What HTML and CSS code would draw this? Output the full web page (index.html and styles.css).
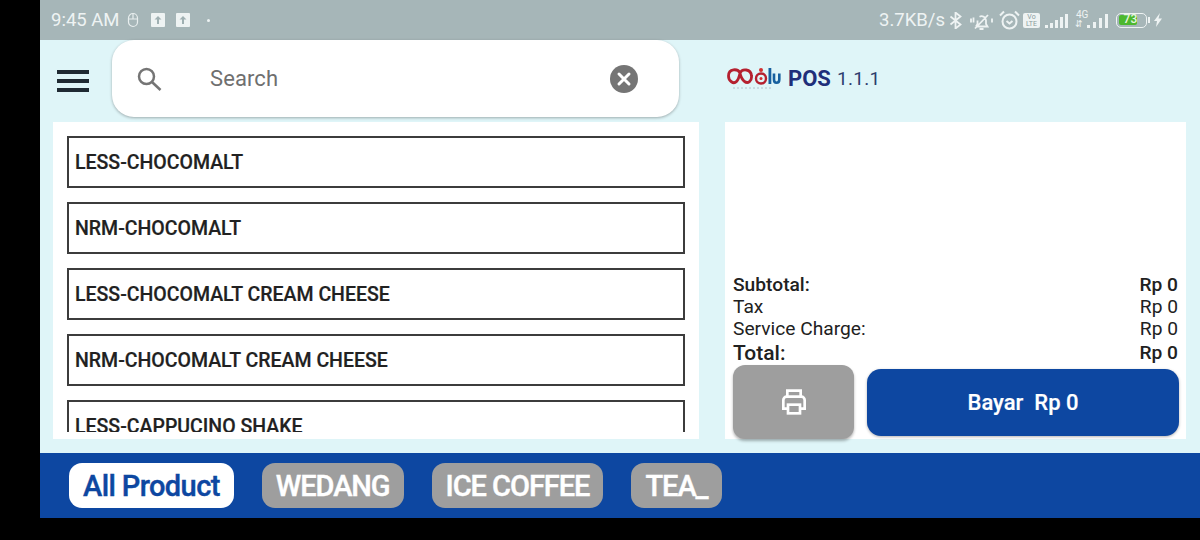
FILE: index.html
```html
<!DOCTYPE html>
<html lang="id">
<head>
    <meta charset="UTF-8">
    <title>Wolu POS</title>
    <link rel="stylesheet" href="styles.css">
</head>
<body>
<div class="screen">
    <div class="status-bar">
        <div class="status-left">
            <span class="clock">9:45 AM</span>
            <svg class="ic-mouse" width="12" height="16" viewBox="0 0 12 16" fill="none" stroke="#e8eeee" stroke-width="1.2"><rect x="1.5" y="1.5" width="9" height="13" rx="4.5"/><path d="M1.5 7h9M6 1.5v5.5"/></svg>
            <svg class="ic-up" width="14" height="14" viewBox="0 0 14 14"><rect width="14" height="14" rx="1" fill="#eef3f3"/><path d="M7 3l3.5 3.5H8V11H6V6.5H3.5z" fill="#9fb0b2"/></svg>
            <svg class="ic-up ic-up2" width="14" height="14" viewBox="0 0 14 14"><rect width="14" height="14" rx="1" fill="#eef3f3"/><path d="M7 3l3.5 3.5H8V11H6V6.5H3.5z" fill="#9fb0b2"/></svg>
            <span class="dot"></span>
        </div>
        <div class="status-right">
            <span class="speed">3.7KB/s</span>
            <svg class="ic-bt" width="13" height="17" viewBox="0 0 13 17" fill="none" stroke="#eef3f3" stroke-width="1.8"><path d="M1.5 4.500l10 8-5 4V.5l5 4-10 8"/></svg>
            <svg class="ic-bell" width="23" height="16" viewBox="0 0 23 16" fill="none" stroke="#eef3f3" stroke-width="1.8"><path d="M6 12.500h11.500L16 10V6.500A4.500 4.500 0 0 0 9.500 2.700M7.500 6.500V10L6 12.500M9.500 15h4M5 14.500L18 1M1 4.500v4M3.500 3.500v5M22 4.500v4"/></svg>
            <svg class="ic-alarm" width="21" height="20" viewBox="0 0 21 20" fill="none" stroke="#eef3f3" stroke-width="2"><circle cx="10.500" cy="11.500" r="7"/><path d="M1 5.500L5 1.500M20 5.500L16 1.500M7.500 11l3 2.500 3-2.500"/></svg>
            <span class="volte">Vo<br>LTE</span>
            <svg class="ic-signal" width="23" height="14" viewBox="0 0 23 14" fill="#eef3f3"><rect x="0" y="11" width="3" height="3"/><rect x="5" y="9" width="3" height="5"/><rect x="10" y="6" width="3" height="8"/><rect x="15" y="3" width="3" height="11"/><rect x="20" y="0" width="3" height="14"/></svg>
            <span class="signal-4g">
                <span class="net-label">4G</span>
                <span class="net-arrows">⇵</span>
                <svg width="21" height="14" viewBox="0 0 21 14" fill="#eef3f3"><rect x="0" y="11" width="3" height="3"/><rect x="6" y="8" width="3" height="6"/><rect x="12" y="4" width="3" height="10"/><rect x="18" y="0" width="3" height="14"/></svg>
            </span>
            <span class="battery"><span class="battery-fill">73</span></span>
            <svg class="ic-bolt" width="8" height="14" viewBox="0 0 8 14" fill="#eef3f3"><path d="M6 0L0 8h3L2 14l6-8.500H4.500z"/></svg>
        </div>
    </div>

    <div class="content">
        <div class="left-col">
            <div class="top-row">
                <div class="burger"><span></span><span></span><span></span></div>
                <div class="search-box">
                    <svg class="ic-search" width="28" height="28" viewBox="0 0 28 28" fill="none" stroke="#757575" stroke-width="2.5"><circle cx="11.500" cy="11.500" r="7.500"/><path d="M17 17l8.500 8"/></svg>
                    <span class="search-text">Search</span>
                    <svg class="ic-clear" width="28" height="28" viewBox="0 0 28 28"><circle cx="14" cy="14" r="14" fill="#757575"/><path d="M9 9l10 10M19 9L9 19" stroke="#fff" stroke-width="3" stroke-linecap="round"/></svg>
                </div>
            </div>
            <div class="product-panel">
                <div class="product-list">
                    <div class="product">LESS-CHOCOMALT</div>
                    <div class="product">NRM-CHOCOMALT</div>
                    <div class="product">LESS-CHOCOMALT CREAM CHEESE</div>
                    <div class="product">NRM-CHOCOMALT CREAM CHEESE</div>
                    <div class="product">LESS-CAPPUCINO SHAKE</div>
                </div>
            </div>
        </div>

        <div class="right-col">
            <div class="brand">
                <svg class="logo" width="54" height="22" viewBox="0 0 54 22" fill="none">
                    <path d="M13 5C11 .5 1.500 0 1.500 8c0 5 5 8.500 8 5.500 2-2 3-6 3.500-8.500.5 2.500 2 6.500 4.500 8.500 3.500 2.500 7.500-.5 7-5.500C24 .5 15 .5 13 5z" stroke="#b5202f" stroke-width="2.800"/>
                    <circle cx="34" cy="10.500" r="5" stroke="#b5202f" stroke-width="2.400"/>
                    <circle cx="34" cy="2" r="2" fill="#d32f2f"/>
                    <circle cx="34" cy="10.500" r="1.500" fill="#d32f2f"/>
                    <rect x="41.500" y="0" width="2.800" height="16" fill="#17609f"/>
                    <path d="M47 5.500v6c0 2.500 1.200 3.200 2.500 3.200s2.800-.7 2.800-3.200v-6" stroke="#17609f" stroke-width="2.600"/>
                    <path d="M6 20h38" stroke="#b4c0cc" stroke-width="1" stroke-dasharray="2 2"/>
                </svg>
                <span class="brand-name">POS</span>
                <span class="brand-ver">1.1.1</span>
            </div>
            <div class="order-panel">
                <div class="totals">
                    <div class="row bold"><span>Subtotal:</span><span>Rp 0</span></div>
                    <div class="row"><span>Tax</span><span>Rp 0</span></div>
                    <div class="row"><span>Service Charge:</span><span>Rp 0</span></div>
                    <div class="row bold total"><span>Total:</span><span>Rp 0</span></div>
                </div>
                <div class="actions">
                    <div class="print-btn">
                        <svg width="32" height="32" viewBox="0 0 24 24" fill="none" stroke="#fff" stroke-width="2"><path d="M7 8V3.500h10V8"/><path d="M7 17H4V10.500A2.500 2.500 0 0 1 6.500 8h11a2.500 2.500 0 0 1 2.500 2.500V17h-3"/><rect x="7.500" y="14" width="9" height="6.500"/></svg>
                    </div>
                    <div class="pay-btn">Bayar&nbsp; Rp 0</div>
                </div>
            </div>
        </div>
    </div>

    <div class="tabs">
        <div class="tab active">All Product</div>
        <div class="tab">WEDANG</div>
        <div class="tab">ICE COFFEE</div>
        <div class="tab">TEA_</div>
    </div>
</div>
</body>
</html>
```
FILE: styles.css
```css
* {
    box-sizing: border-box;
}

body {
    margin: 0;
    padding: 0 0 22px 40px;
    width: 1200px;
    height: 540px;
    overflow: hidden;
    background-color: #000;
    font-family: Roboto, "Liberation Sans", sans-serif;
}

.screen {
    display: flex;
    flex-direction: column;
    height: 518px;
    background-color: #dff5f8;
}

/* status bar */
.status-bar {
    display: flex;
    justify-content: space-between;
    align-items: center;
    height: 40px;
    padding: 0 38px 0 11px;
    background-color: #a6b6b8;
    color: #eef3f3;
}

.status-left,
.status-right {
    display: flex;
    align-items: center;
}

.clock,
.speed {
    font-size: 18.5px;
}

.ic-mouse {
    margin-left: 8px;
}

.ic-up {
    margin-left: 12px;
}

.ic-up2 {
    margin-left: 11px;
}

.dot {
    width: 3px;
    height: 3px;
    margin-left: 17px;
    border-radius: 50%;
    background-color: #eef3f3;
}

.ic-bt {
    margin-left: 4px;
}

.ic-bell {
    margin-left: 8px;
    margin-top: 4px;
}

.ic-alarm {
    margin-left: 6px;
}

.volte {
    width: 17px;
    height: 15px;
    margin-left: 3px;
    padding-top: 1px;
    border-radius: 2px;
    background-color: #eef3f3;
    color: #8b9c9e;
    font-size: 7px;
    line-height: 7px;
    text-align: center;
}

.ic-signal {
    margin-left: 5px;
    margin-top: 2px;
}

.signal-4g {
    position: relative;
    display: flex;
    width: 33px;
    margin-left: 7px;
    margin-top: 2px;
    padding-left: 12px;
}

.net-label {
    position: absolute;
    top: -5px;
    left: 1px;
    font-size: 10px;
}

.net-arrows {
    position: absolute;
    bottom: -1px;
    left: 0;
    font-size: 9px;
    line-height: 9px;
}

.battery {
    position: relative;
    width: 31px;
    height: 15px;
    margin-left: 8px;
    padding: 1.5px;
    border: 1.5px solid #eef3f3;
    border-radius: 5px;
}

.battery::after {
    content: "";
    position: absolute;
    top: 3px;
    right: -4px;
    width: 2px;
    height: 6px;
    background-color: #eef3f3;
}

.battery-fill {
    display: block;
    width: 72%;
    height: 100%;
    border-radius: 2px;
    background-color: #4cb82e;
    color: #e8f5e0;
    font-size: 12px;
    font-weight: 500;
    line-height: 9px;
    text-align: right;
}

.ic-bolt {
    margin-left: 7px;
}

/* main area */
.content {
    display: flex;
    height: 413px;
}

.left-col {
    width: 659px;
    margin-left: 13px;
}

.top-row {
    display: flex;
    align-items: center;
    height: 82px;
}

.burger {
    display: flex;
    flex-direction: column;
    gap: 5px;
    width: 59px;
    padding-left: 4px;
}

.burger span {
    width: 32px;
    height: 4px;
    background-color: #1f2a33;
}

.search-box {
    display: flex;
    align-items: center;
    width: 567px;
    height: 77px;
    margin-bottom: 5px;
    padding: 0 41px 0 23px;
    border-radius: 22px;
    background-color: #fff;
    box-shadow: 0 1px 3px rgba(0, 0, 0, 0.3);
}

.search-text {
    flex: 1;
    margin-left: 47px;
    margin-top: -1px;
    color: #6f6f6f;
    font-size: 22px;
    letter-spacing: 0.1px;
}

.product-panel {
    width: 646px;
    height: 317px;
    padding: 0 14px 7px;
    background-color: #fff;
}

.product-list {
    display: flex;
    flex-direction: column;
    gap: 14px;
    height: 310px;
    padding-top: 14px;
    overflow: hidden;
}

.product {
    flex: none;
    display: flex;
    align-items: center;
    height: 52px;
    padding-top: 1px;
    padding-left: 6px;
    border: 2px solid #3c3c3c;
    color: #212121;
    font-size: 19.5px;
    font-weight: 500;
    -webkit-text-stroke: 0.2px currentColor;
}

.right-col {
    width: 461px;
    margin-left: 13px;
}

.brand {
    display: flex;
    align-items: center;
    height: 82px;
    padding-bottom: 5px;
    padding-left: 2px;
}

.brand-name {
    margin-left: 7px;
    color: #1f2f7a;
    font-size: 22px;
    font-weight: 700;
}

.brand-ver {
    margin-left: 6px;
    color: #2d3d6e;
    font-size: 19px;
    letter-spacing: 0.3px;
}

.order-panel {
    display: flex;
    flex-direction: column;
    justify-content: flex-end;
    height: 317px;
    padding: 0 7px 0 8px;
    background-color: #fff;
}

.totals {
    padding-right: 1px;
    color: #212121;
    font-size: 19.2px;
}

.row {
    display: flex;
    justify-content: space-between;
    height: 22px;
    line-height: 22px;
}

.bold {
    font-weight: 500;
}

.total {
    height: 24px;
    padding-top: 2px;
    font-size: 21px;
}

.total span:last-child {
    font-size: 19.2px;
}

.actions {
    display: flex;
    align-items: flex-end;
    gap: 13px;
    height: 75px;
}

.print-btn {
    display: flex;
    align-items: center;
    justify-content: center;
    width: 121px;
    height: 74px;
    border-radius: 12px;
    background-color: #9e9e9e;
    box-shadow: 0 2px 3px rgba(0, 0, 0, 0.3);
}

.pay-btn {
    flex: 1;
    height: 67px;
    margin-bottom: 3px;
    border-radius: 14px;
    background-color: #0d47a1;
    color: #fff;
    font-size: 22px;
    font-weight: 500;
    line-height: 67px;
    text-align: center;
    box-shadow: 0 1px 3px rgba(0, 0, 0, 0.3);
    -webkit-text-stroke: 0.2px currentColor;
}

/* category tabs */
.tabs {
    display: flex;
    gap: 28px;
    height: 65px;
    padding: 10px 0 0 29px;
    background-color: #0d47a1;
}

.tab {
    height: 45px;
    padding: 0 14px;
    border-radius: 13px;
    background-color: #9e9e9e;
    color: #fff;
    font-size: 29px;
    font-weight: 500;
    letter-spacing: -1.05px;
    line-height: 46px;
    -webkit-text-stroke: 0.4px currentColor;
}

.tab.active {
    background-color: #fff;
    color: #0d47a1;
    letter-spacing: -0.6px;
}
```
